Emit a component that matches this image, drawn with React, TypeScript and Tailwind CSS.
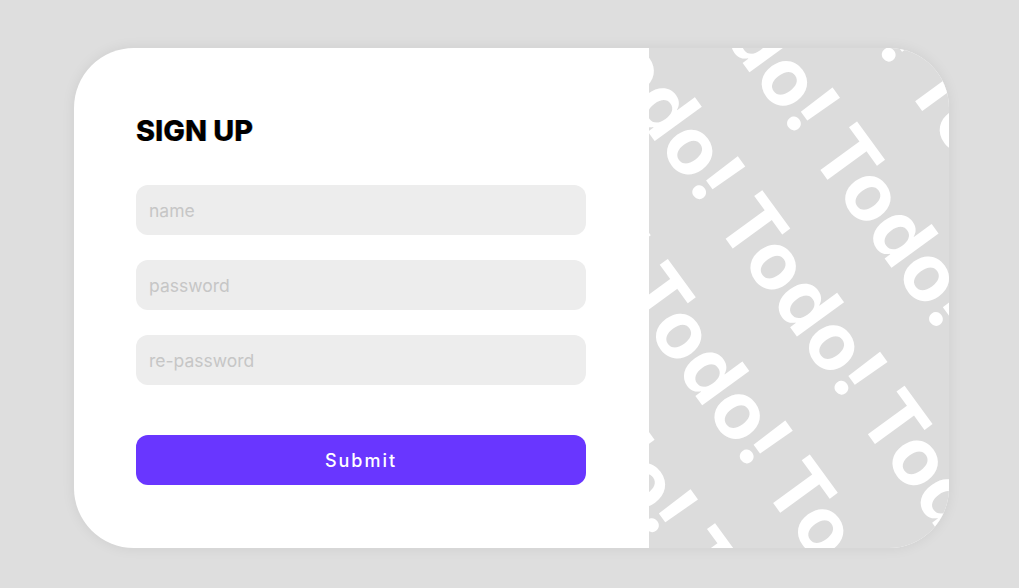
import React from "react";

const FONT = { fontFamily: "Inter, 'Noto Sans', sans-serif" };

// rows of the diagonal "Todo!" backdrop
const ROWS = Array.from({ length: 16 });
const WORD = "Todo! ".repeat(9);

const Field = ({ placeholder }: { placeholder: string }) => (
  <input
    type="text"
    placeholder={placeholder}
    className="h-[50px] w-[450px] rounded-xl bg-[#ededed] pl-[13px] text-[17.5px] text-gray-700 outline-none placeholder:text-[#c6c6c6]"
  />
);

export default function App() {
  return (
    <div className="min-h-screen bg-[#dedede] pl-[74px] pt-[48px]" style={FONT}>
      <div className="flex h-[500px] w-[875px] overflow-hidden rounded-[60px] bg-white shadow-[0_0_14px_rgba(0,0,0,0.07)]">
        {/* Form side */}
        <div className="flex w-[575px] flex-col pl-[62px] pt-[66px]">
          <h1 className="text-[28.8px] font-extrabold leading-[34px] text-black [text-shadow:-0.6px_0_rgba(255,150,0,0.45),0.6px_0_rgba(0,140,255,0.45)]">
            SIGN UP
          </h1>
          <div className="mt-[37px] flex flex-col gap-[25px]">
            <Field placeholder="name" />
            <Field placeholder="password" />
            <Field placeholder="re-password" />
          </div>
          <button className="mt-[50px] h-[50px] w-[450px] rounded-xl bg-[#6936ff] text-[18px] font-medium tracking-[2px] text-white">
            Submit
          </button>
        </div>

        {/* Decorative side */}
        <div className="relative w-[300px] overflow-hidden bg-[#dcdcdc]">
          <div className="absolute left-0 top-0 origin-top-left [transform:rotate(54deg)_translate(-788px,-857px)]">
            {ROWS.map((_, i) => (
              <div
                key={i}
                className="whitespace-pre text-[80px] font-bold leading-[117px] text-white"
              >
                {WORD}
              </div>
            ))}
          </div>
        </div>
      </div>
    </div>
  );
}
